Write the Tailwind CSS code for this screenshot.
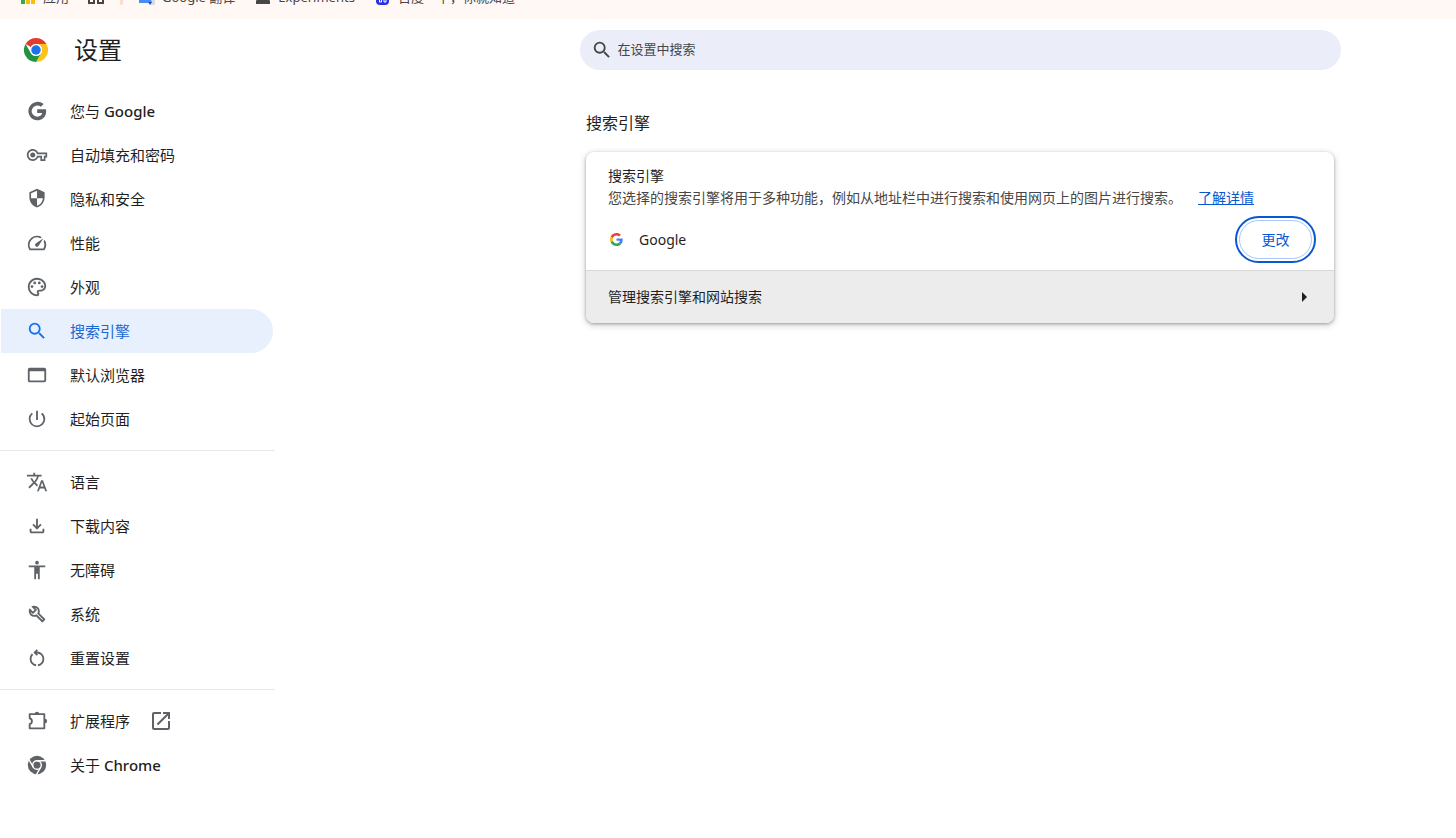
<!DOCTYPE html>
<html lang="zh-CN">
<head>
<meta charset="utf-8">
<title>设置</title>
<script src="https://cdn.jsdelivr.net/npm/@tailwindcss/browser@4"></script>
</head>
<body class="min-h-screen overflow-hidden bg-white font-['Noto_Sans','Noto_Sans_CJK_SC',sans-serif] text-[#1f1f1f]">

<!-- Bookmarks bar, scrolled partly out of view -->
<div class="h-[19px] overflow-hidden bg-[#fff8f5]">
  <div class="-mt-[17px] flex h-7 items-center pl-5 text-[13px] leading-5 text-[#4a4543]">
    <a href="#" class="flex items-center gap-[7px]">
      <svg class="size-4" viewBox="0 0 16 16"><path fill="#ea4335" d="M1 1h4v4H1z"/><path fill="#ea4335" d="M6 1h4v4H6z"/><path fill="#4285f4" d="M11 1h4v4h-4z"/><path fill="#34a853" d="M1 11h4v4H1z"/><path fill="#fbbc04" d="M6 11h4v4H6zM11 11h4v4h-4z"/></svg>
      应用
    </a>
    <button type="button" aria-label="标签页组" class="ml-[17px]">
      <svg class="size-5" viewBox="0 0 20 20" fill="none" stroke="#4a4543" stroke-width="2"><path d="M3 2h5v5H3zM12 2h5v5h-5zM3 11h5v5H3zM12 11h5v5h-5z"/></svg>
    </button>
    <span class="ml-3.5 h-4 w-[3px] rounded-full bg-[#fddccb]"></span>
    <a href="#" class="ml-4 flex items-center gap-[7px]">
      <svg class="size-4" viewBox="0 0 16 16"><path fill="#dadce0" d="M6 4h10v12h-4z"/><path fill="#4c8bf5" d="M0 0h9l4 14H0z"/><path fill="#1a56c4" d="M9 13h4l-2 3z"/></svg>
      Google 翻译
    </a>
    <a href="#" class="ml-5 flex items-center gap-[7px]">
      <svg class="size-4" viewBox="0 0 16 16"><path fill="#474747" d="M4 1h8v6l3 5v3H1v-3l3-5z"/></svg>
      Experiments
    </a>
    <a href="#" class="ml-5 flex items-center gap-[7px]">
      <svg class="size-4" viewBox="0 0 16 16"><circle cx="4" cy="6" r="2" fill="#2932e1"/><circle cx="12" cy="6" r="2" fill="#2932e1"/><rect x="1" y="7" width="13" height="9" rx="4" fill="#2932e1"/><path d="M4.500 10v3h2v-3M9 10v3h2v-3" stroke="#fff" fill="none"/></svg>
      百度一下&#xff0c;你就知道
    </a>
  </div>
</div>

<div class="flex">
  <aside class="w-[464px] shrink-0">
    <header class="flex h-[70px] items-center gap-[26px] pb-2 pl-6">
      <svg class="size-6" viewBox="0 0 48 48"><path fill="#e33b2e" d="M3.200 12A24 24 0 0 1 44.800 12H24a12 12 0 0 0-10.400 6z"/><path fill="#fcc31e" d="M44.800 12A24 24 0 0 1 24 48l10.400-18A12 12 0 0 0 24 12z"/><path fill="#229342" d="M3.200 12A24 24 0 0 0 24 48l10.400-18a12 12 0 0 1-20.800 0z"/><circle cx="24" cy="24" r="12" fill="#fff"/><circle cx="24" cy="24" r="9.500" fill="#1a73e8"/></svg>
      <h1 class="text-2xl">设置</h1>
    </header>

    <nav class="w-[275px] text-[15px]">
      <ul class="pl-px pr-0.5">
        <li><a href="#" class="flex h-11 items-center gap-[22px] pl-[25px]">
          <svg class="size-[22px] fill-[#5f6368]" viewBox="0 0 24 24"><path d="M21.800 10.200H12.200v4.100h5.500c-.5 2.500-2.600 3.900-5.400 3.900a6.100 6.100 0 1 1 3.900-10.800l3-3A10.100 10.100 0 1 0 12.300 22.200c5 0 9.700-3.600 9.700-10 0-.6-.1-1.300-.2-2z"/></svg>
          <span>您与 <span class="font-medium">Google</span></span></a></li>
        <li><a href="#" class="flex h-11 items-center gap-[22px] pl-[25px]">
          <svg class="size-[22px] fill-[#5f6368]" viewBox="-1 -1 26 26"><path fill-rule="evenodd" d="M22 19h-6v-4h-2.700c-1.100 2.400-3.600 4-6.300 4-3.900 0-7-3.100-7-7s3.100-7 7-7c2.700 0 5.200 1.600 6.300 4H24v6h-2v4zm-4-2h2v-4h2v-2H11.900l-.2-.7C11 8.300 9.100 7 7 7c-2.800 0-5 2.200-5 5s2.200 5 5 5c2.100 0 4-1.300 4.700-3.300l.2-.7H18v4zM7 15c-1.700 0-3-1.300-3-3s1.300-3 3-3 3 1.300 3 3-1.300 3-3 3z"/></svg>
          自动填充和密码</a></li>
        <li><a href="#" class="flex h-11 items-center gap-[22px] pl-[25px]">
          <svg class="size-[22px] fill-[#5f6368]" viewBox="-1 0 26 26"><path d="M12 1 3 5v6c0 5.550 3.840 10.740 9 12 5.160-1.260 9-6.450 9-12V5l-9-4zm0 10.990h7c-.53 4.120-3.280 7.790-7 8.940V12H5V6.300l7-3.110v8.800z"/></svg>
          隐私和安全</a></li>
        <li><a href="#" class="flex h-11 items-center gap-[22px] pl-[25px]">
          <svg class="size-[22px] fill-[#5f6368]" viewBox="0 0 24 24"><path d="m20.380 8.570-1.230 1.850a8 8 0 0 1-.22 7.580H5.070A8 8 0 0 1 15.580 6.850l1.850-1.230A10 10 0 0 0 3.350 19a2 2 0 0 0 1.720 1h13.850a2 2 0 0 0 1.740-1 10 10 0 0 0-.27-10.440zm-9.790 6.840a2 2 0 0 0 2.830 0l5.660-8.490-8.490 5.660a2 2 0 0 0 0 2.830z"/></svg>
          性能</a></li>
        <li><a href="#" class="flex h-11 items-center gap-[22px] pl-[25px]">
          <svg class="size-[22px] fill-[#5f6368]" viewBox="0 0 24 24"><path d="M12 22C6.490 22 2 17.510 2 12S6.490 2 12 2s10 4.040 10 9c0 3.310-2.690 6-6 6h-1.770c-.28 0-.5.22-.5.5 0 .12.050.23.130.33.410.47.640 1.060.640 1.670A2.500 2.500 0 0 1 12 22zm0-18c-4.410 0-8 3.590-8 8s3.590 8 8 8c.28 0 .5-.22.5-.5a.54.54 0 0 0-.14-.35c-.41-.46-.63-1.050-.63-1.650a2.500 2.500 0 0 1 2.500-2.500H16c2.210 0 4-1.790 4-4 0-3.860-3.590-7-8-7z"/><circle cx="6.500" cy="11.500" r="1.500"/><circle cx="9.500" cy="7.500" r="1.500"/><circle cx="14.500" cy="7.500" r="1.500"/><circle cx="17.500" cy="11.500" r="1.500"/></svg>
          外观</a></li>
        <li><a href="#" aria-current="page" class="flex h-11 items-center gap-[22px] rounded-r-full bg-[#e8f0fe] pl-[25px] text-[#1967d2]">
          <svg class="size-[22px] fill-[#1a73e8]" viewBox="0 0 24 24"><path d="M15.500 14h-.79l-.28-.27A6.470 6.470 0 0 0 16 9.500 6.500 6.500 0 1 0 9.500 16c1.610 0 3.090-.59 4.230-1.570l.27.28v.79l5 4.990L20.490 19l-4.990-5zm-6 0C7.010 14 5 11.990 5 9.500S7.010 5 9.500 5 14 7.010 14 9.500 11.990 14 9.500 14z"/></svg>
          搜索引擎</a></li>
        <li><a href="#" class="flex h-11 items-center gap-[22px] pl-[25px]">
          <svg class="size-[22px] fill-[#5f6368]" viewBox="0 0 24 24"><path d="M20 4H4a2 2 0 0 0-2 2v12c0 1.100.9 2 2 2h16a2 2 0 0 0 2-2V6a2 2 0 0 0-2-2zm0 14H4V8h16v10z"/></svg>
          默认浏览器</a></li>
        <li><a href="#" class="flex h-11 items-center gap-[22px] pl-[25px]">
          <svg class="size-[22px] fill-[#5f6368]" viewBox="0 0 24 24"><path d="M13 3h-2v10h2V3zm4.830 2.170-1.420 1.420A6.920 6.920 0 0 1 19 12c0 3.870-3.130 7-7 7A6.995 6.995 0 0 1 7.580 6.580L6.170 5.170A8.932 8.932 0 0 0 3 12a9 9 0 0 0 18 0c0-2.740-1.230-5.180-3.170-6.830z"/></svg>
          起始页面</a></li>
      </ul>
      <hr class="my-[9px] border-[#e8e8e8]">
      <ul class="pl-px pr-0.5">
        <li><a href="#" class="flex h-11 items-center gap-[22px] pl-[25px]">
          <svg class="size-[22px] fill-[#5f6368]" viewBox="0 0 24 24"><path d="m12.870 15.070-2.540-2.510.03-.03A17.520 17.520 0 0 0 14.070 6H17V4h-7V2H8v2H1v1.990h11.170C11.500 7.920 10.440 9.750 9 11.350 8.070 10.320 7.300 9.190 6.690 8h-2c.73 1.630 1.730 3.170 2.980 4.560l-5.090 5.020L4 19l5-5 3.110 3.110.76-2.040zM18.500 10h-2L12 22h2l1.120-3h4.750L21 22h2l-4.500-12zm-2.620 7 1.620-4.330L19.120 17h-3.240z"/></svg>
          语言</a></li>
        <li><a href="#" class="flex h-11 items-center gap-[22px] pl-[25px]">
          <svg class="size-[22px] fill-[#5f6368]" viewBox="0 -960 960 960"><path d="M480-320 280-520l56-58 104 104v-326h80v326l104-104 56 58-200 200ZM240-160q-33 0-56.500-23.500T160-240v-120h80v120h480v-120h80v120q0 33-23.500 56.500T720-160H240Z"/></svg>
          下载内容</a></li>
        <li><a href="#" class="flex h-11 items-center gap-[22px] pl-[25px]">
          <svg class="size-[22px] fill-[#5f6368]" viewBox="0 0 24 24"><circle cx="12" cy="4" r="2"/><path d="M21 9h-6v13h-2v-6h-2v6H9V9H3V7h18v2z"/></svg>
          无障碍</a></li>
        <li><a href="#" class="flex h-11 items-center gap-[22px] pl-[25px]">
          <svg class="size-[22px] fill-[#5f6368]" viewBox="0 -960 960 960"><path d="M686-132 444-376q-20 8-40.500 12t-43.500 4q-100 0-170-70t-70-170q0-36 10-68.500t28-61.500l146 146 72-72-146-146q29-18 61.500-28t68.500-10q100 0 170 70t70 170q0 23-4 43.500T584-516l244 242q12 12 12 29t-12 29l-84 84q-12 12-29 12t-29-12Zm29-85 27-27-256-256q18-20 26-46.500t8-53.500q0-60-38.500-104.500T386-758l74 74q12 12 12 28t-12 28L332-500q-12 12-28 12t-28-12l-74-74q9 57 53.500 95.500T360-440q26 0 52-8t47-25l256 256Z"/></svg>
          系统</a></li>
        <li><a href="#" class="flex h-11 items-center gap-[22px] pl-[25px]">
          <svg class="size-[22px] fill-[#5f6368]" viewBox="0 -960 960 960"><path d="M440-122q-121-15-200.500-105.500T160-440q0-66 26-126.500T260-672l57 57q-38 34-57.500 79T240-440q0 88 56 155.500T440-202v80Zm80 0v-80q87-16 143.500-83T720-440q0-100-70-170t-170-70h-3l44 44-56 56-140-140 140-140 56 56-44 44h3q134 0 227 93t93 227q0 121-79.500 211.500T520-122Z"/></svg>
          重置设置</a></li>
      </ul>
      <hr class="my-[9px] border-[#e8e8e8]">
      <ul class="pl-px pr-0.5">
        <li><a href="#" class="flex h-11 items-center gap-[22px] pl-[25px]">
          <svg class="size-[22px] fill-none stroke-[#5f6368] stroke-2" viewBox="0 0 24 24"><path stroke-linejoin="round" d="M4 4.500h16V20H4v-4.500c3.300-1 3.300-5.500 0-6.500z"/><path fill="#5f6368" stroke="none" d="M9.500 4.500a2.500 2.500 0 0 1 5 0zM20.500 9.500a2.600 2.600 0 0 1 0 5.200z"/></svg>
          扩展程序
          <svg class="-ml-[3px] size-6 fill-[#5f6368]" viewBox="0 0 24 24"><path d="M19 19H5V5h7V3H5a2 2 0 0 0-2 2v14a2 2 0 0 0 2 2h14c1.100 0 2-.9 2-2v-7h-2v7zM14 3v2h3.590l-9.830 9.830 1.410 1.410L19 6.410V10h2V3h-7z"/></svg></a></li>
        <li><a href="#" class="flex h-11 items-center gap-[22px] pl-[25px]">
          <svg class="size-[22px]" viewBox="0 0 24 24"><circle cx="12" cy="12" r="10" fill="#5f6368"/><circle cx="12" cy="12" r="4.700" fill="none" stroke="#fff" stroke-width="1.500"/><path d="M12 7.300h9.500M7.900 14.300L3.200 6.200M16.100 14.300l-4.700 8.200" stroke="#fff" stroke-width="1.500"/></svg>
          <span>关于 <span class="font-medium">Chrome</span></span></a></li>
      </ul>
    </nav>
  </aside>

  <main class="flex min-w-0 flex-1 flex-col items-center pt-[11px]">
    <label class="flex h-10 w-full max-w-[761px] items-center gap-[5px] rounded-full bg-[#ebeef8] pl-[11px] pr-5">
      <svg class="size-[22px] shrink-0 fill-[#474747]" viewBox="0 0 24 24"><path d="M15.500 14h-.79l-.28-.27A6.470 6.470 0 0 0 16 9.500 6.500 6.500 0 1 0 9.500 16c1.610 0 3.090-.59 4.230-1.570l.27.28v.79l5 4.990L20.490 19l-4.990-5zm-6 0C7.010 14 5 11.990 5 9.500S7.010 5 9.500 5 14 7.010 14 9.500 11.990 14 9.500 14z"/></svg>
      <input type="search" aria-label="在设置中搜索" placeholder="在设置中搜索" class="min-w-0 flex-1 bg-transparent text-[13px] outline-none placeholder:text-[#474747]">
    </label>

    <section class="mt-[41px] w-full max-w-[748px]">
      <h2 class="pb-[17px] text-base leading-6">搜索引擎</h2>
      <div class="overflow-hidden rounded-lg bg-white shadow-[0_1px_3px_rgba(60,64,67,0.4),0_2px_6px_1px_rgba(60,64,67,0.2)]">
        <div class="pb-[7px] pl-[22px] pr-[18px] pt-[13px] text-sm leading-[22px]">
          <h3>搜索引擎</h3>
          <p class="text-[#474747]">您选择的搜索引擎将用于多种功能&#xff0c;例如从地址栏中进行搜索和使用网页上的图片进行搜索。<a href="#" class="ml-4 text-[#0b57d0] underline">了解详情</a></p>
          <div class="mt-[7px] flex items-center">
            <svg class="mx-0.5 size-[13px]" viewBox="0 0 48 48"><path fill="#EA4335" d="M24 9.500c3.540 0 6.710 1.220 9.210 3.600l6.850-6.850C35.900 2.380 30.470 0 24 0 14.620 0 6.510 5.380 2.560 13.220l7.980 6.190C12.430 13.720 17.740 9.500 24 9.500z"/><path fill="#4285F4" d="M46.980 24.550c0-1.570-.15-3.090-.38-4.550H24v9.020h12.940c-.58 2.960-2.260 5.480-4.780 7.180l7.730 6c4.510-4.180 7.090-10.360 7.090-17.650z"/><path fill="#FBBC05" d="M10.530 28.590c-.48-1.450-.76-2.990-.76-4.590s.27-3.140.76-4.590l-7.980-6.190C.92 16.460 0 20.120 0 24c0 3.880.92 7.540 2.560 10.780l7.970-6.190z"/><path fill="#34A853" d="M24 48c6.480 0 11.930-2.130 15.890-5.810l-7.730-6c-2.150 1.450-4.920 2.300-8.160 2.300-6.260 0-11.570-4.220-13.470-9.910l-7.980 6.190C6.510 42.620 14.620 48 24 48z"/></svg>
            <span class="ml-3.5">Google</span>
            <button type="button" class="ml-auto rounded-full border-2 border-[#0b57d0] p-0.5 text-[#0b57d0]"><span class="flex h-[39px] w-[73px] items-center justify-center rounded-full border border-[#a8c7fa]">更改</span></button>
          </div>
        </div>
        <a href="#" class="flex h-[53px] items-center justify-between border-t border-[#d9d9d9] bg-[#ececec] pl-[22px] pr-[27px] text-sm">
          管理搜索引擎和网站搜索
          <svg class="h-2.5 w-[5px] fill-[#1f1f1f]" viewBox="0 0 5 10"><path d="M0 0l5 5-5 5z"/></svg>
        </a>
      </div>
    </section>
  </main>
</div>
</body>
</html>
